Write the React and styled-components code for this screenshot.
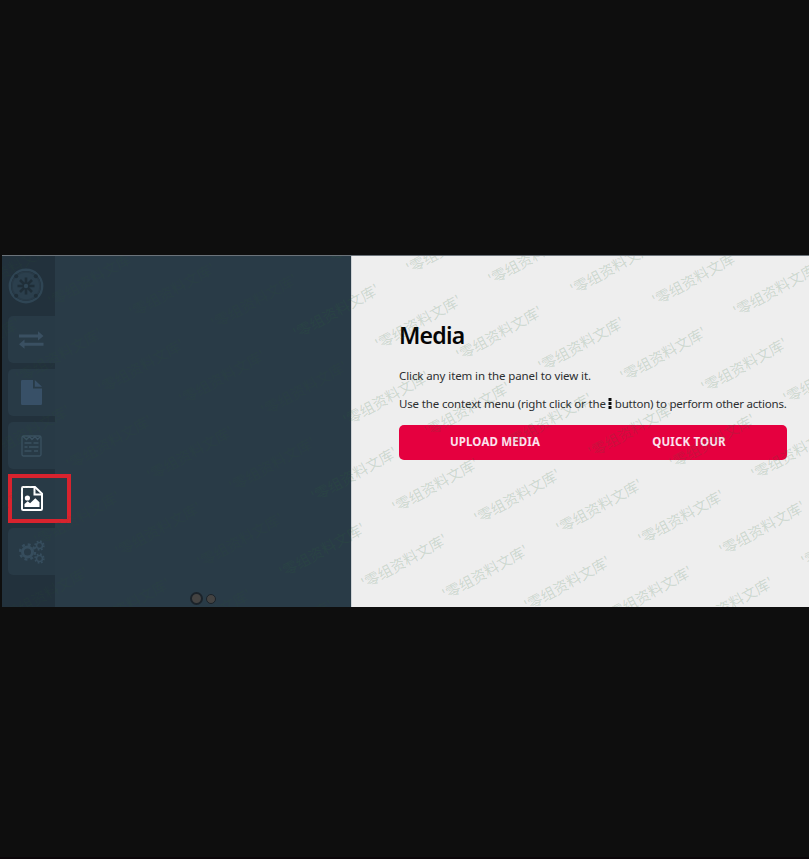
import React from "react";
import styled, { createGlobalStyle } from "styled-components";

const GlobalStyle = createGlobalStyle`
  * { box-sizing: border-box; }
  body { margin: 0; background: #0e0e0e; font-family: "Noto Sans", "Noto Sans CJK SC", sans-serif; }
`;

const Page = styled.div`
  height: 859px;
  padding: 255px 0 0 2px;
  overflow: hidden;
  border-bottom: 2px solid #0b0609;
`;

const Panel = styled.div`
  position: relative;
  display: flex;
  height: 352px;
  overflow: hidden;
  border-top: 1px solid #6b737a;
`;

const Sidebar = styled.nav`
  flex: 0 0 53px;
  display: flex;
  flex-direction: column;
  align-items: flex-end;
  gap: 6px;
  padding-top: 7px;
  background: #22313c;
  color: #334b5c;
`;

const Logo = styled.div`
  width: 47px;
  height: 47px;
  display: grid;
  place-items: center start;
  padding-bottom: 2px;
`;

const Tile = styled.div`
  display: flex;
  align-items: center;
  justify-content: center;
  width: 47px;
  height: 47px;
  border-radius: 5px 0 0 5px;
  background: #283a46;
  color: ${(p) => (p.$active ? "#ffffff" : p.$tone || "#334b5c")};

  svg { display: block; }
`;

const ItemPanel = styled.section`
  flex: 0 0 296px;
  display: flex;
  align-items: flex-end;
  justify-content: center;
  gap: 3px;
  padding-bottom: 2px;
  background: #293b47;
`;

const Dot = styled.span`
  width: ${(p) => p.$size}px;
  height: ${(p) => p.$size}px;
  margin-bottom: ${(p) => p.$lift || 0}px;
  border: ${(p) => p.$ring}px solid #1b232a;
  border-radius: 50%;
  background: #444342;
`;

const Content = styled.main`
  flex: 1;
  min-width: 0;
  padding: 62px 23px 0 47px;
  border-left: 1px solid #cfd3d6;
  background: #eeeeee;
  color: #2c2e30;
`;

const Title = styled.h1`
  margin: 0;
  font-size: 23px;
  line-height: 34px;
  font-weight: 600;
  letter-spacing: -0.75px;
  color: #050505;
`;

const Text = styled.p`
  margin: ${(p) => p.$top}px 0 0;
  display: flex;
  align-items: center;
  font-size: 11.5px;
  line-height: 18px;
  white-space: nowrap;
`;

const Phrase = styled.span`
  letter-spacing: ${(p) => p.$spacing}px;
`;

const Kebab = styled.svg`
  flex: none;
  margin: 0 3px 1px 2px;
`;

const ButtonBar = styled.div`
  display: grid;
  grid-template-columns: 1fr 1fr;
  width: 388px;
  height: 35px;
  margin-top: 12px;
  border-radius: 5px;
  background: #e5003f;
  overflow: hidden;
`;

const Button = styled.button`
  padding: 0 2px 2px 0;
  border: 0;
  background: transparent;
  color: #fbe3ee;
  font: 700 11.5px/18px "Noto Sans", sans-serif;
  letter-spacing: 0.15px;
`;

const Highlight = styled.div`
  position: absolute;
  left: 6px;
  top: 218px;
  width: 63px;
  height: 49px;
  border: 4px solid #d8232e;
`;

const Watermarks = styled.div`
  position: absolute;
  inset: 0;
  overflow: hidden;
  pointer-events: none;
`;

const Mark = styled.span`
  position: absolute;
  transform: rotate(-29deg);
  transform-origin: 0 50%;
  font: 400 14.6px/20px "Noto Sans CJK SC", sans-serif;
  white-space: nowrap;
  color: ${(p) => (p.$faint ? "rgba(45, 95, 45, 0.11)" : "rgba(45, 105, 55, 0.18)")};
`;

const marks = [];
for (let row = -1; row < 7; row += 1) {
  for (let col = -8; col < 9; col += 1) {
    const x = 405.4 + col * 81.7 - row * 31.9;
    const y = 13 + col * 10.7 + row * 76.1;
    if (x > -80 && x < 806 && y > 0 && y < 395) marks.push({ x, y });
  }
}

const WheelIcon = () => (
  <svg width="36" height="36" viewBox="0 0 36 36" fill="none" stroke="#2f4554">
    <circle cx="18" cy="18" r="16.2" strokeWidth="2.4" />
    <circle cx="18" cy="18" r="14" fill="#2b3f4d" stroke="#283a47" strokeWidth="1.5" />
    <g stroke="#1f2e38" strokeWidth="2.6">
      <path d="M18 9.5v17M9.5 18h17M12 12l12 12M24 12L12 24" />
    </g>
    <circle cx="18" cy="18" r="2.2" fill="#2f4554" stroke="none" />
    <g fill="#1f2e38" stroke="none">
      <circle cx="8.2" cy="8.2" r="2" />
      <circle cx="27.8" cy="8.2" r="2" />
      <circle cx="8.2" cy="27.8" r="2" />
      <circle cx="27.8" cy="27.8" r="2" />
    </g>
  </svg>
);

const ArrowsIcon = () => (
  <svg width="25" height="18" viewBox="0 0 25 18" fill="currentColor">
    <path d="M0 3.4h19V.2L24.5 5 19 9.6V6.4H0zM24.5 11.8h-19V8.4L0 13.2l5.5 4.6v-3h19z" />
  </svg>
);

const FileIcon = () => (
  <svg width="21" height="25" viewBox="0 0 21 25" fill="currentColor">
    <path d="M1.2 0H12v8.6h9v15.2q0 1.2-1.2 1.2H1.2Q0 25 0 23.8V1.2Q0 0 1.2 0zM13.8 0l7.2 6.8h-7.2z" />
  </svg>
);

const ImageFileIcon = () => (
  <svg width="22" height="25" viewBox="0 0 22 25" fill="none" stroke="currentColor" strokeWidth="2">
    <path d="M2.2 1H14l7 6.6v15.2q0 1.2-1.2 1.2H2.2Q1 24 1 22.8V2.2Q1 1 2.2 1z" />
    <path d="M13.5 1v7.5H21" />
    <circle cx="6.4" cy="12" r="2.6" fill="currentColor" stroke="none" />
    <path d="M3.5 21v-3l3.2-2.8 2.4 2 5.2-5 4.2 4V21z" fill="currentColor" stroke="none" />
  </svg>
);

const ListIcon = () => (
  <svg width="21" height="22" viewBox="0 0 21 22" fill="none" stroke="currentColor" strokeWidth="1.3">
    <rect x="1" y="1" width="19" height="20" rx="1.5" />
    <path d="M2 1.5l3.5 3 3-3 2.5 3 3-3 2.5 3 3-3" />
    <path d="M3.5 8h7M12.5 8h5M3.5 12h3M8 12h9.5M3.5 16h7M13 16h4" />
  </svg>
);

const GearsIcon = () => (
  <svg width="26" height="24" viewBox="0 0 26 24" fill="none" stroke="currentColor">
    <circle cx="8.5" cy="12" r="5" strokeWidth="3" />
    <circle cx="8.5" cy="12" r="7.5" strokeWidth="2.4" strokeDasharray="2.95 2.94" />
    <circle cx="20.5" cy="5.5" r="3" strokeWidth="1.6" />
    <circle cx="20.5" cy="5.5" r="4.4" strokeWidth="1.6" strokeDasharray="1.73 1.73" />
    <circle cx="20.5" cy="18.5" r="3" strokeWidth="1.6" />
    <circle cx="20.5" cy="18.5" r="4.4" strokeWidth="1.6" strokeDasharray="1.73 1.73" />
  </svg>
);

export default function App() {
  return (
    <>
      <GlobalStyle />
      <Page>
        <Panel>
          <Sidebar>
            <Logo><WheelIcon /></Logo>
            <Tile $tone="#3a5062"><ArrowsIcon /></Tile>
            <Tile $tone="#385067"><FileIcon /></Tile>
            <Tile $tone="#3a5160"><ListIcon /></Tile>
            <Tile $active><ImageFileIcon /></Tile>
            <Tile $tone="#364d5d"><GearsIcon /></Tile>
          </Sidebar>
          <ItemPanel>
            <Dot $size={13} $ring={2} />
            <Dot $size={10} $lift={1} $ring={1.5} />
          </ItemPanel>
          <Content>
            <Title>Media</Title>
            <Text $top={15}>
              <Phrase $spacing={-0.1}>Click any item in the panel to view it.</Phrase>
            </Text>
            <Text $top={10}>
              <Phrase $spacing={-0.15}>Use the context menu (right click or the</Phrase>
              <Kebab width="4" height="11" viewBox="0 0 4 11" fill="#0a0a0a">
                <path d="M.5 0h3v3h-3zM.5 4h3v3h-3zM.5 8h3v3h-3z" />
              </Kebab>
              <Phrase $spacing={-0.22}>button) to perform other actions.</Phrase>
            </Text>
            <ButtonBar>
              <Button>UPLOAD MEDIA</Button>
              <Button>QUICK TOUR</Button>
            </ButtonBar>
          </Content>
          <Highlight />
          <Watermarks aria-hidden="true">
            {marks.map(({ x, y }) => (
              <Mark key={`${x}:${y}`} $faint={x < 270} style={{ left: x, top: y - 10 }}>
                '零组资料文库'
              </Mark>
            ))}
          </Watermarks>
        </Panel>
      </Page>
    </>
  );
}
